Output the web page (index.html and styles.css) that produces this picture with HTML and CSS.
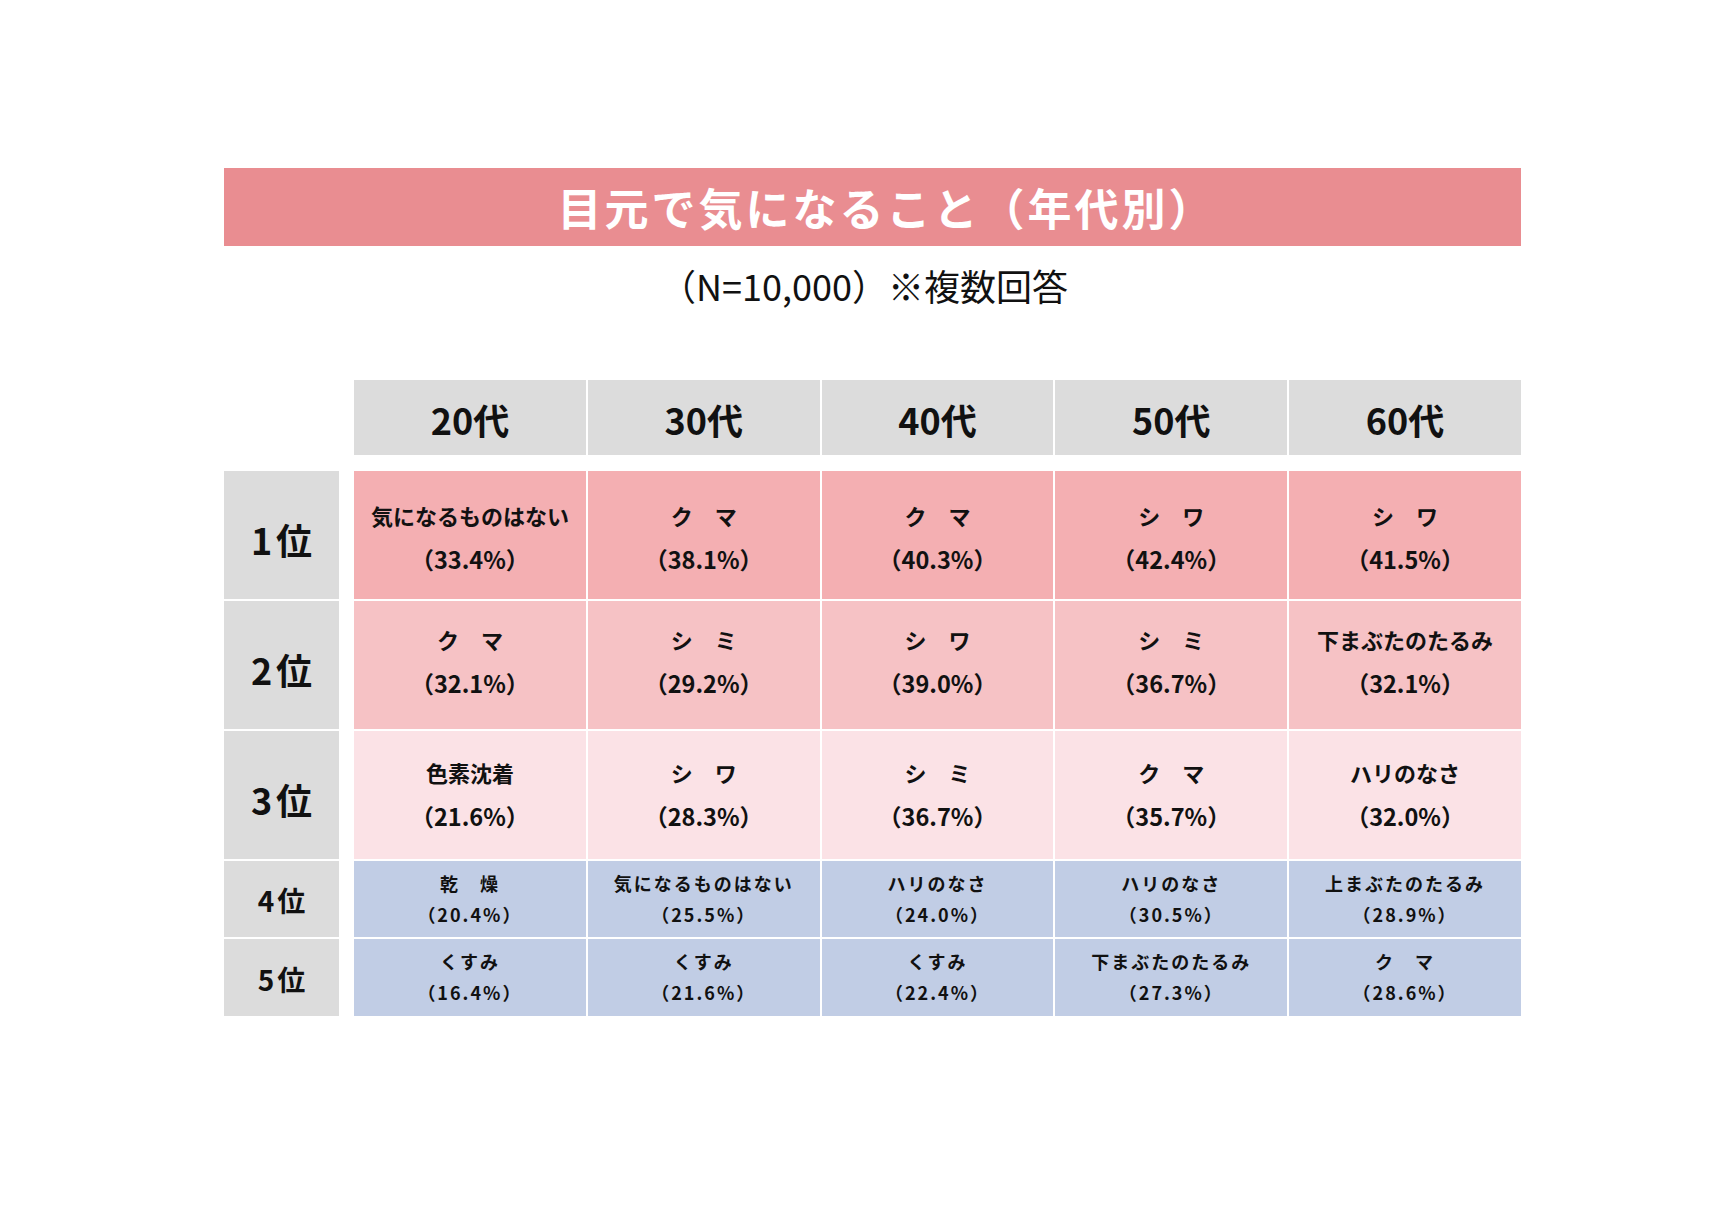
FILE: index.html
```html
<!DOCTYPE html>
<html lang="ja">
<head>
<meta charset="utf-8">
<title>目元で気になること（年代別）</title>
<link rel="stylesheet" href="styles.css">
</head>
<body>
<main class="page">
  <h1 class="title">目元で気になること（年代別）</h1>
  <p class="subtitle">（N=10,000）※複数回答</p>

  <div class="table">
    <div class="row head">
      <div class="cells">
        <div class="cell hcell">20代</div>
        <div class="cell hcell">30代</div>
        <div class="cell hcell">40代</div>
        <div class="cell hcell">50代</div>
        <div class="cell hcell">60代</div>
      </div>
    </div>

    <div class="row big r1">
      <div class="label">1位</div>
      <div class="cells">
        <div class="cell"><span>気になるものはない</span><span class="pct">（33.4%）</span></div>
        <div class="cell"><span>ク　マ</span><span class="pct">（38.1%）</span></div>
        <div class="cell"><span>ク　マ</span><span class="pct">（40.3%）</span></div>
        <div class="cell"><span>シ　ワ</span><span class="pct">（42.4%）</span></div>
        <div class="cell"><span>シ　ワ</span><span class="pct">（41.5%）</span></div>
      </div>
    </div>

    <div class="row big r2">
      <div class="label">2位</div>
      <div class="cells">
        <div class="cell"><span>ク　マ</span><span class="pct">（32.1%）</span></div>
        <div class="cell"><span>シ　ミ</span><span class="pct">（29.2%）</span></div>
        <div class="cell"><span>シ　ワ</span><span class="pct">（39.0%）</span></div>
        <div class="cell"><span>シ　ミ</span><span class="pct">（36.7%）</span></div>
        <div class="cell"><span>下まぶたのたるみ</span><span class="pct">（32.1%）</span></div>
      </div>
    </div>

    <div class="row big r3">
      <div class="label">3位</div>
      <div class="cells">
        <div class="cell"><span>色素沈着</span><span class="pct">（21.6%）</span></div>
        <div class="cell"><span>シ　ワ</span><span class="pct">（28.3%）</span></div>
        <div class="cell"><span>シ　ミ</span><span class="pct">（36.7%）</span></div>
        <div class="cell"><span>ク　マ</span><span class="pct">（35.7%）</span></div>
        <div class="cell"><span>ハリのなさ</span><span class="pct">（32.0%）</span></div>
      </div>
    </div>

    <div class="row small r4">
      <div class="label">4位</div>
      <div class="cells">
        <div class="cell"><span>乾　燥</span><span>（20.4%）</span></div>
        <div class="cell"><span>気になるものはない</span><span>（25.5%）</span></div>
        <div class="cell"><span>ハリのなさ</span><span>（24.0%）</span></div>
        <div class="cell"><span>ハリのなさ</span><span>（30.5%）</span></div>
        <div class="cell"><span>上まぶたのたるみ</span><span>（28.9%）</span></div>
      </div>
    </div>

    <div class="row small r5">
      <div class="label">5位</div>
      <div class="cells">
        <div class="cell"><span>くすみ</span><span>（16.4%）</span></div>
        <div class="cell"><span>くすみ</span><span>（21.6%）</span></div>
        <div class="cell"><span>くすみ</span><span>（22.4%）</span></div>
        <div class="cell"><span>下まぶたのたるみ</span><span>（27.3%）</span></div>
        <div class="cell"><span>ク　マ</span><span>（28.6%）</span></div>
      </div>
    </div>
  </div>
</main>
</body>
</html>
```

FILE: styles.css
```css
* { box-sizing: border-box; }

html, body {
  margin: 0;
  padding: 0;
  background: #ffffff;
}

body {
  font-family: "Noto Sans CJK JP", "Noto Sans", sans-serif;
  color: #111111;
}

.page {
  width: 1297px;
  margin-left: 224px;
  padding-top: 168px;
}

.title {
  margin: 0;
  height: 78px;
  background: #e98d91;
  color: #ffffff;
  font-size: 44px;
  font-weight: 700;
  letter-spacing: 3px;
  line-height: 78px;
  text-align: center;
  padding-left: 28px;
}

.subtitle {
  margin: 19px 0 0;
  height: 40px;
  line-height: 40px;
  font-size: 36px;
  font-weight: 400;
  text-align: center;
  color: #111111;
  padding-right: 17px;
}

.table {
  margin-top: 75px;
  display: flex;
  flex-direction: column;
  gap: 2px;
}

.row {
  display: flex;
  gap: 15px;
}

.row.head {
  padding-left: 130px;
  height: 75px;
  margin-bottom: 14px;
}

.row.big { height: 128px; }
.row.small { height: 76px; }
.row.r5 { height: 77px; }

.label {
  width: 115px;
  flex: none;
  background: #dcdcdc;
  display: flex;
  align-items: center;
  justify-content: center;
  font-weight: 700;
  font-size: 36px;
  letter-spacing: 4px;
  padding-left: 4px;
  padding-top: 8px;
}

.row.small .label {
  font-size: 28px;
  letter-spacing: 3px;
  padding-left: 3px;
  padding-top: 2px;
}

.cells {
  flex: 1;
  display: flex;
  gap: 2px;
}

.cell {
  flex: 1;
  display: flex;
  flex-direction: column;
  align-items: center;
  justify-content: center;
  font-weight: 700;
  font-size: 22px;
  line-height: 44px;
}

.cell span { display: block; white-space: nowrap; }

.cell .pct { font-size: 23.5px; }

.hcell {
  background: #dcdcdc;
  font-size: 36px;
  line-height: 75px;
  padding-top: 4px;
}

.r1 .cell { background: #f4afb2; padding-top: 4px; }
.r2 .cell { background: #f6c2c5; padding-bottom: 8px; }
.r3 .cell { background: #fbe2e6; padding-bottom: 2px; }
.r4 .cell, .r5 .cell {
  background: #c1cde5;
  font-size: 18px;
  line-height: 31px;
  letter-spacing: 2px;
}
.r5 .cell { padding-bottom: 2px; }
```
